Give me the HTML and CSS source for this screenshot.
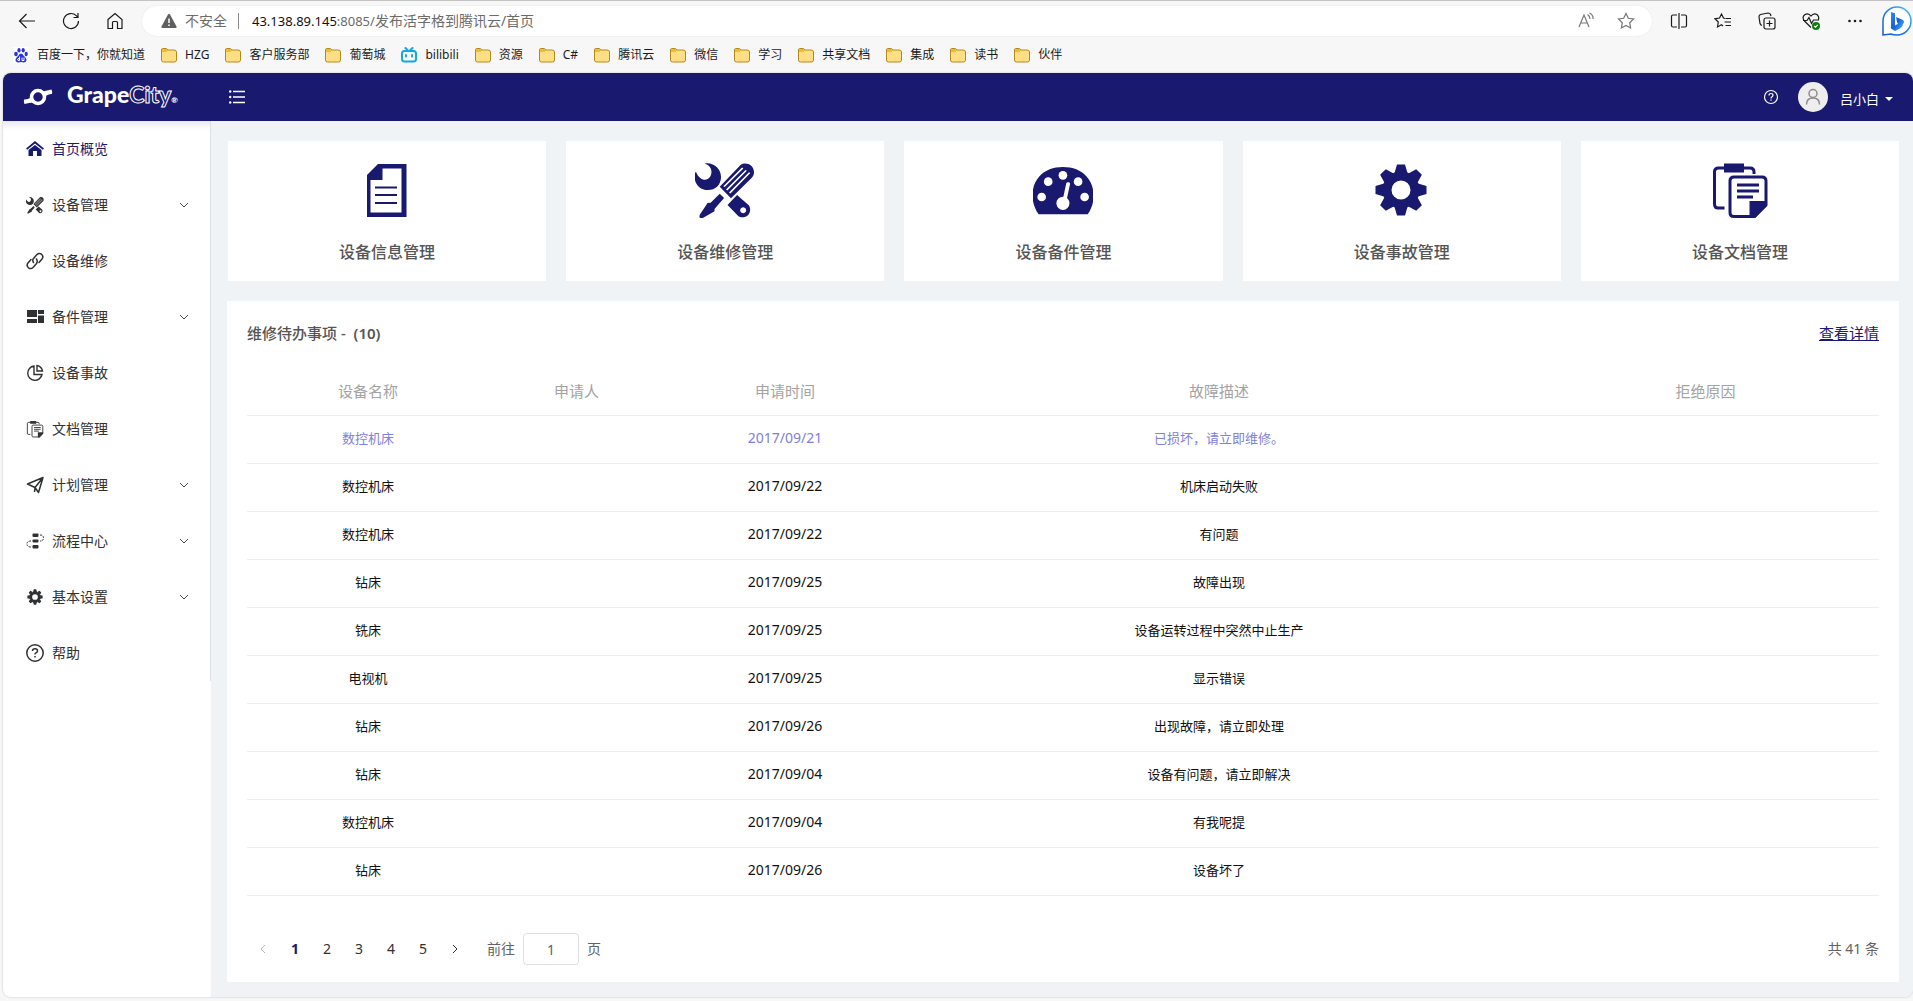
FILE: index.html
```html
<!DOCTYPE html>
<html lang="zh-CN">
<head>
<meta charset="utf-8">
<title>首页</title>
<link rel="stylesheet" href="styles.css">
</head>
<body>
<header class="browser">
  <div class="toolbar">
    <div class="nav-buttons">
      <button class="tool" aria-label="返回"><svg width="18" height="18" viewBox="0 0 18 18"><path d="M17 9H1.500M8.500 2L1.500 9l7 7"/></svg></button>
      <button class="tool" aria-label="刷新"><svg width="18" height="18" viewBox="0 0 18 18"><path d="M16.500 9a7.500 7.500 0 1 1-2.200-5.300L16 5.500M16 1v4.500h-4.500"/></svg></button>
      <button class="tool" aria-label="主页"><svg width="18" height="18" viewBox="0 0 18 18"><path d="M2 7.500L9 1.500l7 6v9h-4.500v-6q0-1-1-1h-3q-1 0-1 1v6H2z"/></svg></button>
    </div>
    <div class="address">
      <svg width="16" height="16" viewBox="0 0 16 16"><path d="M7 1.500q1-1.500 2 0l6.500 12q.5 1.500-1 1.500h-13q-1.500 0-1-1.500z" fill="#5f5f5f"/><path d="M8 5.500v4.500M8 11.500v1.500" stroke="#fff" stroke-width="1.500"/></svg>
      <span class="unsafe">不安全</span>
      <span class="address-divider"></span>
      <div class="url" role="textbox" aria-label="地址"><span class="url-host">43.138.89.145</span><span class="url-latin">:8085/</span>发布活字格到腾讯云/首页</div>
      <button class="tool faint" aria-label="朗读"><svg width="18" height="18" viewBox="0 0 18 18"><path d="M2 15L7 3l5 12M3.800 11h6.400M10.500 2.500q2.500 1.500 2.500 4.500M12.500 1q4 2 3.500 6"/></svg></button>
      <button class="tool faint" aria-label="收藏此页"><svg width="18" height="18" viewBox="0 0 18 18"><path d="M9 1.500l2.300 4.800 5.200.7-3.800 3.700.9 5.300L9 13.500 4.400 16l.9-5.300L1.500 7l5.200-.7z"/></svg></button>
    </div>
    <div class="extras">
      <button class="tool" aria-label="分屏"><svg width="18" height="18" viewBox="0 0 18 18"><path d="M7 3H3q-1.500 0-1.500 1.500v9Q1.500 15 3 15h4M11 3h4q1.500 0 1.500 1.500v9q0 1.500-1.500 1.500h-4M9 1v16"/></svg></button>
      <button class="tool" aria-label="收藏夹"><svg width="18" height="18" viewBox="0 0 18 18"><path d="M11 6.500L9.500 6 7.500 2 5.500 6 1 6.800l3.300 3.200-.8 5 4-2.200L9 14M11.500 6.500H17M10.500 10H17M11.500 13.500H17"/></svg></button>
      <button class="tool" aria-label="集锦"><svg width="18" height="18" viewBox="0 0 18 18"><rect x="6" y="6" width="11" height="11" rx="2"/><path d="M11.500 8.500v6M8.500 11.500h6M4 13.500Q2.500 13 2 11.500L1 5q0-2 1.500-2.500L10 1q2 0 2.500 1.500L13 4"/></svg></button>
      <button class="tool" aria-label="性能"><svg width="18" height="18" viewBox="0 0 18 18"><path d="M9 15.500L2.500 9Q-.5 5 3 2.500 6.500.5 9 4q2.500-3.500 6-1.500 2.800 2.500 1.200 6M1 8.500h4L7 5.500l2.500 6L11.500 8H16"/><circle cx="14" cy="14" r="4" fill="#107c10" stroke="none"/><path d="M12.300 14l1.200 1.200 2.300-2.300" stroke="#fff"/></svg></button>
      <button class="tool" aria-label="更多"><svg width="18" height="18" viewBox="0 0 18 18"><g fill="#1b1b1b" stroke="none"><circle cx="3.500" cy="9" r="1.300"/><circle cx="9" cy="9" r="1.300"/><circle cx="14.500" cy="9" r="1.300"/></g></svg></button>
      <button class="bing" aria-label="必应"><svg width="32" height="32" viewBox="0 0 32 32"><defs><linearGradient id="ring" x1="0" y1="1" x2="1" y2="0"><stop offset="0" stop-color="#1556c8"/><stop offset=".6" stop-color="#258bea"/><stop offset="1" stop-color="#4fc8ee"/></linearGradient><linearGradient id="bee" x1="0" y1="0" x2="1" y2="1"><stop offset="0" stop-color="#2491f4"/><stop offset=".5" stop-color="#1a5ed8"/><stop offset="1" stop-color="#49c8f0"/></linearGradient></defs><path d="M2 30V16A14 14 0 1 1 16 30q-4 0-6-1z" fill="#fff" stroke="url(#ring)" stroke-width="1.500"/><path d="M10 7l4 1.300v12.200l8-4.500q1 5-3 7.500l-5 2.500-4-2.500z M15 12l7 3q2 2 0 4l-4 2-2-4z" fill="url(#bee)"/></svg></button>
    </div>
  </div>
  <svg class="symbols" width="0" height="0" aria-hidden="true">
    <symbol id="folder" viewBox="0 0 16 16"><path d="M1.500 1.500h4l1.500 1.500H13q2.500 0 2.500 2v8q0 2-2 2h-11q-2 0-2-2v-10q0-1.500 1-1.500z" fill="#ffdf85" stroke="#b58a1b"/><path d="M1 5V3q0-1 1-1h3.500L7 3.300 5.500 5z" fill="#eebd2d"/></symbol>
    <symbol id="chevron" viewBox="0 0 12 12"><path d="M2 4l4 4 4-4" fill="none" stroke="#4d4d50"/></symbol>
  </svg>
  <nav class="bookmarks">
    <a href="#"><svg width="16" height="16" viewBox="0 0 16 16"><rect width="16" height="16" fill="#fff"/><g fill="#2932e1"><ellipse cx="3" cy="7" rx="1.800" ry="2.300"/><ellipse cx="6" cy="3.200" rx="1.600" ry="2.200"/><ellipse cx="10.200" cy="3.200" rx="1.600" ry="2.200"/><ellipse cx="13.200" cy="7" rx="1.600" ry="2.200"/><path d="M8 6.500q1.500 0 2.500 2l2 2q1.500 2 .5 4-1.500 1.500-5 .5-3.500 1-5-.5-1-2 .5-4l2-2q1-2 2.500-2z"/></g><path d="M6.500 9.500v4H5q-1.500-1.500 1.500-2.500M9 10.500v3h2v-3" fill="none" stroke="#fff"/></svg>百度一下，你就知道</a>
    <a href="#"><svg width="16" height="16"><use href="#folder"/></svg>HZG</a>
    <a href="#"><svg width="16" height="16"><use href="#folder"/></svg>客户服务部</a>
    <a href="#"><svg width="16" height="16"><use href="#folder"/></svg>葡萄城</a>
    <a href="#"><svg width="16" height="16" viewBox="0 0 16 16"><g fill="none" stroke="#12a8e0" stroke-width="2" stroke-linecap="round"><rect x="1" y="4" width="14" height="10.500" rx="2.500"/><path d="M4.500 1l2 2M11.500 1l-2 2M5 8v1.500M11 8v1.500"/></g></svg>bilibili</a>
    <a href="#"><svg width="16" height="16"><use href="#folder"/></svg>资源</a>
    <a href="#"><svg width="16" height="16"><use href="#folder"/></svg>C#</a>
    <a href="#"><svg width="16" height="16"><use href="#folder"/></svg>腾讯云</a>
    <a href="#"><svg width="16" height="16"><use href="#folder"/></svg>微信</a>
    <a href="#"><svg width="16" height="16"><use href="#folder"/></svg>学习</a>
    <a href="#"><svg width="16" height="16"><use href="#folder"/></svg>共享文档</a>
    <a href="#"><svg width="16" height="16"><use href="#folder"/></svg>集成</a>
    <a href="#"><svg width="16" height="16"><use href="#folder"/></svg>读书</a>
    <a href="#"><svg width="16" height="16"><use href="#folder"/></svg>伙伴</a>
  </nav>
</header>

<div class="app">
  <header class="app-header">
    <a class="brand" href="#">
      <svg width="30" height="18" viewBox="0 0 30 18"><circle cx="15" cy="9" r="6.500" fill="none" stroke="#fff" stroke-width="3.600"/><path d="M1 11.500Q4 12 8 9.500l2.500 5Q6 14.500 1.500 16 .5 14 1 11.500zM19.500 3.500Q24 2.500 28.500 1.500q1 2 .5 4.500-3.500-.5-7 2.500z" fill="#fff"/></svg>
      <span class="brand-name">Grape<span class="brand-outline">City</span><span class="brand-mark">®</span></span>
    </a>
    <button class="menu-toggle" aria-label="折叠菜单"><svg width="16" height="16" viewBox="0 0 16 16"><path d="M4 2.500h12M4 8h12M4 13.500h12" stroke="#fff" stroke-width="1.300"/><g fill="#fff"><circle cx="1.200" cy="2.500" r="1.200"/><circle cx="1.200" cy="8" r="1.200"/><circle cx="1.200" cy="13.500" r="1.200"/></g></svg></button>
    <div class="account">
      <button class="help" aria-label="帮助"><svg width="16" height="16" viewBox="0 0 16 16"><circle cx="8" cy="8" r="6.500" fill="none" stroke="#fff" stroke-width="1.200"/><path d="M6 6.500Q6 4.500 8 4.500t2 1.800q0 1-1.200 1.700Q8 8.500 8 9.500M8 10.500v1.300" fill="none" stroke="#fff" stroke-width="1.200"/></svg></button>
      <button class="user">
        <svg width="30" height="30" viewBox="0 0 30 30"><circle cx="15" cy="15" r="15" fill="#eee"/><g fill="none" stroke="#8c8c8c" stroke-width="1.500"><circle cx="15" cy="11.500" r="4"/><path d="M8.500 22.500q0-6.500 6.500-6.500t6.500 6.500"/></g></svg>
        <span class="user-name">吕小白<svg class="caret" width="8" height="4" viewBox="0 0 8 4"><path d="M0 0h8L4 4z" fill="#fff"/></svg></span>
      </button>
    </div>
  </header>

  <div class="body">
    <aside class="sidebar">
      <nav class="menu">
        <a class="active" href="#"><svg width="18" height="18" viewBox="0 0 18 18"><path d="M9 1l9 7.500-1.200 1.300L9 3.500 1.200 9.800 0 8.500z" fill="#191970"/><path d="M9 5l6.500 5v6H11v-5H7v5H2.500v-6z" fill="#191970"/></svg><span>首页概览</span></a>
        <a href="#"><svg width="18" height="18" viewBox="0 0 60 56"><use href="#tools"/></svg><span>设备管理</span><svg class="more" width="12" height="12"><use href="#chevron"/></svg></a>
        <a href="#"><svg width="18" height="18" viewBox="0 0 18 18"><g fill="none" stroke="#303133" stroke-width="1.500" stroke-linecap="round"><path d="M7.500 10.500Q6 8 7.500 6.500l3.500-4Q13 .5 15.500 2.200 18 4.500 16 7l-3 3.500"/><path d="M10.500 7q1.500 2.500 0 4.500l-3.500 4q-2 2-4.500.3Q0 13.500 2 11l3-3.500"/></g></svg><span>设备维修</span></a>
        <a href="#"><svg width="18" height="18" viewBox="0 0 18 18"><path d="M1 2h10v7H1zM12 2h6v4h-6zM12 7.500h6V15h-6zM1 11h10v4H1z" fill="#303133"/></svg><span>备件管理</span><svg class="more" width="12" height="12"><use href="#chevron"/></svg></a>
        <a href="#"><svg width="18" height="18" viewBox="0 0 18 18"><g fill="none" stroke="#303133" stroke-width="1.400"><path d="M8 2a7.200 7.200 0 1 0 8 8.500H8z"/><path d="M11 1.500a7 7 0 0 1 5.500 5.500H11z"/></g></svg><span>设备事故</span></a>
        <a href="#"><svg width="18" height="18" viewBox="0 0 60 56"><use href="#papers"/></svg><span>文档管理</span></a>
        <a href="#"><svg width="18" height="18" viewBox="0 0 18 18"><path d="M1.500 8L17 1.500 12.500 16.500 9 11.500zM17 1.500l-8 10-.5 4.500" fill="none" stroke="#303133" stroke-width="1.500" stroke-linejoin="round"/></svg><span>计划管理</span><svg class="more" width="12" height="12"><use href="#chevron"/></svg></a>
        <a href="#"><svg width="18" height="18" viewBox="0 0 18 18"><g fill="#303133"><rect x="6.500" y="1.500" width="6" height="3.500" rx="1"/><rect x="6.500" y="7.500" width="6" height="3" rx="1"/><rect x="6.500" y="13" width="6" height="3.500" rx="1"/></g><path d="M14 3q3.500 0 3.500 3T14 9M5 9Q1 9 1 12t4 3" fill="none" stroke="#303133" stroke-dasharray="2 1"/></svg><span>流程中心</span><svg class="more" width="12" height="12"><use href="#chevron"/></svg></a>
        <a href="#"><svg width="18" height="18" viewBox="-30 -30 60 60"><use href="#gear"/></svg><span>基本设置</span><svg class="more" width="12" height="12"><use href="#chevron"/></svg></a>
        <a href="#"><svg width="18" height="18" viewBox="0 0 18 18"><circle cx="9" cy="9" r="8.200" fill="none" stroke="#303133" stroke-width="1.500"/><path d="M6.500 7Q6.500 4.800 9 4.800t2.500 2.100q0 1.200-1.500 2Q9 9.500 9 10.500M9 12v1.500" fill="none" stroke="#303133" stroke-width="1.500"/></svg><span>帮助</span></a>
      </nav>
    </aside>

    <main class="main">
      <section class="cards">
        <a class="card" href="#">
          <svg width="60" height="56" viewBox="0 0 60 56"><path d="M21 2h28.500v53H10V13z" fill="#191970"/><path d="M25.500 6.500h19v44h-31V18h12z" fill="#fff"/><path d="M18 25.500h22M18 33h22M18 41h22" stroke="#191970" stroke-width="2"/></svg>
          <span>设备信息管理</span>
        </a>
        <a class="card" href="#">
          <svg width="60" height="56" viewBox="0 0 60 56">
            <g id="tools" transform="scale(.4337 .3333) translate(-1095 -96)" fill="currentColor">
              <path d="M1117 100C1140 96 1155 118 1155 140 1155 165 1142 180 1125 180 1105 180 1094 160 1094 140 1094 133 1095 128 1097 125 1103 142 1110 149 1118 149 1127 149 1133 138 1133 125 1133 113 1126 105 1117 100Z"/>
              <path d="M1152 170L1200 105C1212 94 1232 105 1231 128 1231 135 1228 140 1226 143L1178 205Z"/>
              <path d="M1152 191L1162 204 1140 237V244L1113 264 1110 266 1105 262 1106 254 1124 219 1131 218Z"/>
              <path fill-rule="evenodd" d="M1192 195L1219 226C1224 235 1223 248 1217 256 1210 264 1200 264 1194 257L1170 225ZM1206 232a7 9 0 1 0 .1 0Z"/>
              <path d="M1162 170L1205 114M1168 180L1213 121M1175 189L1221 128" fill="none" stroke="#fff" stroke-width="4"/>
            </g>
          </svg>
          <span>设备维修管理</span>
        </a>
        <a class="card" href="#">
          <svg width="60" height="56" viewBox="0 0 60 56"><g transform="scale(.4337 .3333) translate(-353 -96)"><path d="M366 253C345 215 349 165 367 140 381 120 400 111 422 111 445 111 463 120 477 140 495 165 500 215 479 253Z" fill="#191970"/><g fill="#fff"><ellipse cx="422" cy="136" rx="10" ry="13"/><ellipse cx="388" cy="155" rx="10" ry="13"/><ellipse cx="457" cy="155" rx="10" ry="13"/><ellipse cx="373" cy="201" rx="10" ry="13"/><ellipse cx="472" cy="201" rx="10" ry="13"/><ellipse cx="422" cy="220" rx="15" ry="20"/></g><path d="M434 161L426 210" stroke="#fff" stroke-width="9" stroke-linecap="round"/></g></svg>
          <span>设备备件管理</span>
        </a>
        <a class="card" href="#">
          <svg width="60" height="56" viewBox="-29 -28 60 56">
            <g id="gear" fill="currentColor">
              <circle r="14" fill="none" stroke="currentColor" stroke-width="9"/>
              <g id="teeth"><path id="tooth" d="M-6.500-17L-4-25.500H4L6.500-17zM-6.500 17L-4 25.500H4L6.500 17z"/><use href="#tooth" transform="rotate(90)"/></g>
              <use href="#teeth" transform="rotate(45)"/>
            </g>
          </svg>
          <span>设备事故管理</span>
        </a>
        <a class="card" href="#">
          <svg width="60" height="56" viewBox="0 0 60 56">
            <g id="papers" fill="none" stroke="currentColor" stroke-width="3">
              <path d="M14.500 46H8q-3.500 0-3.500-4V10q0-4 4-4H40q4 0 4 4v2"/>
              <path d="M14 1.500h20v9H14z" fill="currentColor" stroke="none"/>
              <path d="M24 15H52q4 0 4 4V43L44.500 54.500H24q-4 0-4-4V19q0-4 4-4z"/>
              <path d="M39.500 39H57v5L45 56h-5.500z" fill="currentColor" stroke="none"/>
              <path d="M27 23h22M27 29h22M27 35h16"/>
            </g>
          </svg>
          <span>设备文档管理</span>
        </a>
      </section>

      <section class="panel">
        <div class="panel-head">
          <h2>维修待办事项 -&nbsp; <span class="count">(10)</span></h2>
          <a href="#">查看详情</a>
        </div>
        <table class="tasks">
          <colgroup><col class="col-name"><col class="col-person"><col class="col-date"><col class="col-desc"><col class="col-reason"></colgroup>
          <thead><tr><th>设备名称</th><th>申请人</th><th>申请时间</th><th>故障描述</th><th>拒绝原因</th></tr></thead>
          <tbody>
            <tr class="current"><td>数控机床</td><td></td><td class="date">2017/09/21</td><td>已损坏，请立即维修。</td><td></td></tr>
            <tr><td>数控机床</td><td></td><td class="date">2017/09/22</td><td>机床启动失败</td><td></td></tr>
            <tr><td>数控机床</td><td></td><td class="date">2017/09/22</td><td>有问题</td><td></td></tr>
            <tr><td>钻床</td><td></td><td class="date">2017/09/25</td><td>故障出现</td><td></td></tr>
            <tr><td>铣床</td><td></td><td class="date">2017/09/25</td><td>设备运转过程中突然中止生产</td><td></td></tr>
            <tr><td>电视机</td><td></td><td class="date">2017/09/25</td><td>显示错误</td><td></td></tr>
            <tr><td>钻床</td><td></td><td class="date">2017/09/26</td><td>出现故障，请立即处理</td><td></td></tr>
            <tr><td>钻床</td><td></td><td class="date">2017/09/04</td><td>设备有问题，请立即解决</td><td></td></tr>
            <tr><td>数控机床</td><td></td><td class="date">2017/09/04</td><td>有我呢提</td><td></td></tr>
            <tr><td>钻床</td><td></td><td class="date">2017/09/26</td><td>设备坏了</td><td></td></tr>
          </tbody>
        </table>
        <div class="pager">
          <button aria-label="上一页" disabled><svg width="12" height="12" viewBox="0 0 12 12"><path d="M8 2L4 6l4 4" fill="none" stroke="#b4b7bd"/></svg></button>
          <button class="current">1</button>
          <button>2</button>
          <button>3</button>
          <button>4</button>
          <button>5</button>
          <button aria-label="下一页"><svg width="12" height="12" viewBox="0 0 12 12"><path d="M4 2l4 4-4 4" fill="none" stroke="#303133"/></svg></button>
          <label class="jump">前往<input type="text" value="1" aria-label="页码">页</label>
          <span class="total">共 41 条</span>
        </div>
      </section>
    </main>
  </div>
</div>
</body>
</html>
```
FILE: styles.css
```css
* {
  box-sizing: border-box;
}

body {
  display: flex;
  flex-direction: column;
  min-height: 100vh;
  margin: 0;
  background: #f7f7f7;
  color: #303133;
  font: 14px/20px "Noto Sans", "Noto Sans CJK SC", sans-serif;
}

svg {
  display: block;
  flex: none;
}

a {
  color: inherit;
  text-decoration: none;
}

button {
  display: flex;
  align-items: center;
  justify-content: center;
  padding: 0;
  border: 0;
  background: none;
  color: inherit;
  font: inherit;
}

/* Browser bars */
.browser {
  height: 73px;
  border-top: 1px solid #c3c3c3;
}

.symbols {
  position: absolute;
}

.toolbar {
  display: flex;
  align-items: center;
  padding-top: 4px;
}

.nav-buttons {
  display: flex;
  gap: 26px;
  padding: 0 18px;
}

.tool svg {
  fill: none;
  stroke: #1b1b1b;
  stroke-width: 1.2;
}

.tool.faint svg {
  stroke: #767676;
}

.address {
  display: flex;
  flex: 1;
  align-items: center;
  height: 30px;
  padding: 0 17px 1px 19px;
  border-radius: 15px;
  background: #fff;
  box-shadow: 0 0 2px #e2e2e2;
  color: #6b6b6b;
}

.unsafe {
  margin-left: 8px;
}

.address-divider {
  width: 1px;
  height: 16px;
  margin: 0 13px 0 11px;
  background: #8a8a8a;
}

.url {
  flex: 1;
}

.url-host,
.url-latin {
  font-size: 13px;
}

.url-host {
  color: #111;
}

.address .faint {
  margin-left: 22px;
}

.extras {
  display: flex;
  align-items: center;
  gap: 26px;
  padding-left: 18px;
}

.bing {
  margin-left: -9px;
}

.bookmarks {
  display: flex;
  gap: 16px;
  padding: 8px 13px;
  color: #1b1b1b;
  font-size: 12px;
}

.bookmarks a {
  display: flex;
  align-items: center;
  gap: 8px;
}

/* Application frame */
.app {
  display: flex;
  flex: 1;
  flex-direction: column;
  margin: 0 0 4px 3px;
  overflow: hidden;
  border-radius: 8px;
  box-shadow: 0 0 2px #b5b5b5;
}

.app-header {
  display: flex;
  align-items: center;
  height: 48px;
  padding: 0 20px;
  background: #191970;
  color: #fff;
}

.brand {
  display: flex;
  align-items: center;
  gap: 14px;
  width: 206px;
}

.brand-name {
  font: 900 23px/28px Lato, sans-serif;
}

.brand-outline {
  color: #191970;
  -webkit-text-stroke: 1px #fff;
}

.brand-mark {
  font-size: 8px;
}

.account {
  display: flex;
  align-items: center;
  gap: 19px;
  margin-left: auto;
}

.user {
  gap: 12px;
  font-size: 13px;
}

.user-name {
  display: flex;
  align-items: center;
  gap: 6px;
  padding-top: 3px;
}

.body {
  display: flex;
  flex: 1;
}

/* Side menu */
.sidebar {
  width: 208px;
  flex: none;
  background: #fff;
  box-shadow: inset 0 8px 8px -6px #dcdce6;
}

.menu {
  border-right: 1px solid #dcdfe6;
}

.menu a {
  display: flex;
  align-items: center;
  gap: 8px;
  height: 56px;
  padding: 0 20px 0 23px;
}

.menu .active {
  color: #191970;
}

.more {
  margin-left: auto;
}

/* Content */
.main {
  display: flex;
  flex: 1;
  flex-direction: column;
  gap: 20px;
  min-width: 0;
  padding: 20px 14px 15px 16px;
  background: #eff3f6;
}

.cards {
  display: grid;
  grid-template-columns: repeat(5, 1fr);
  gap: 20px;
  padding-left: 1px;
}

.card {
  display: flex;
  flex-direction: column;
  align-items: center;
  gap: 22px;
  padding: 21px 0 17px;
  background: #fff;
  color: #191970;
}

.card span {
  color: #555;
  font-size: 16px;
  font-weight: 500;
  line-height: 24px;
}

.panel {
  padding: 20px 20px 17px;
  background: #fff;
}

.panel-head {
  display: flex;
  align-items: center;
  justify-content: space-between;
  height: 24px;
  margin-bottom: 24px;
  font-size: 15px;
}

.panel-head h2 {
  margin: 0;
  color: #555;
  font-size: 15px;
  font-weight: 500;
}

.panel-head .count {
  font-weight: 600;
}

.panel-head a {
  color: #191970;
  text-decoration: underline;
}

.tasks {
  width: 100%;
  border-spacing: 0;
  table-layout: fixed;
  color: #111;
  font-size: 13px;
  text-align: center;
}

/* Column widths share out the table in proportion */
.col-name,
.col-date {
  width: 242px;
}

.col-person {
  width: 175px;
}

.col-desc {
  width: 626px;
}

.col-reason {
  width: 347px;
}

.tasks th,
.tasks td {
  height: 48px;
  padding: 0 0 3px;
  border-bottom: 1px solid #efefef;
}

.tasks th {
  height: 47px;
  color: #a3a3a3;
  font-size: 15px;
  font-weight: 400;
}

.tasks .date {
  font-size: 14px;
}

.tasks .current {
  color: #8080e0;
}

.pager {
  display: flex;
  align-items: center;
  height: 32px;
  margin-top: 37px;
}

.pager button {
  width: 32px;
  height: 32px;
}

.pager .current {
  color: #191970;
  font-weight: 700;
}

.jump {
  display: flex;
  align-items: center;
  gap: 8px;
  margin-left: 16px;
  color: #606266;
}

.jump input {
  width: 56px;
  height: 32px;
  padding: 0;
  border: 1px solid #dcdfe6;
  border-radius: 4px;
  color: #606266;
  font: inherit;
  text-align: center;
}

.total {
  margin-left: auto;
  color: #606266;
}
```
